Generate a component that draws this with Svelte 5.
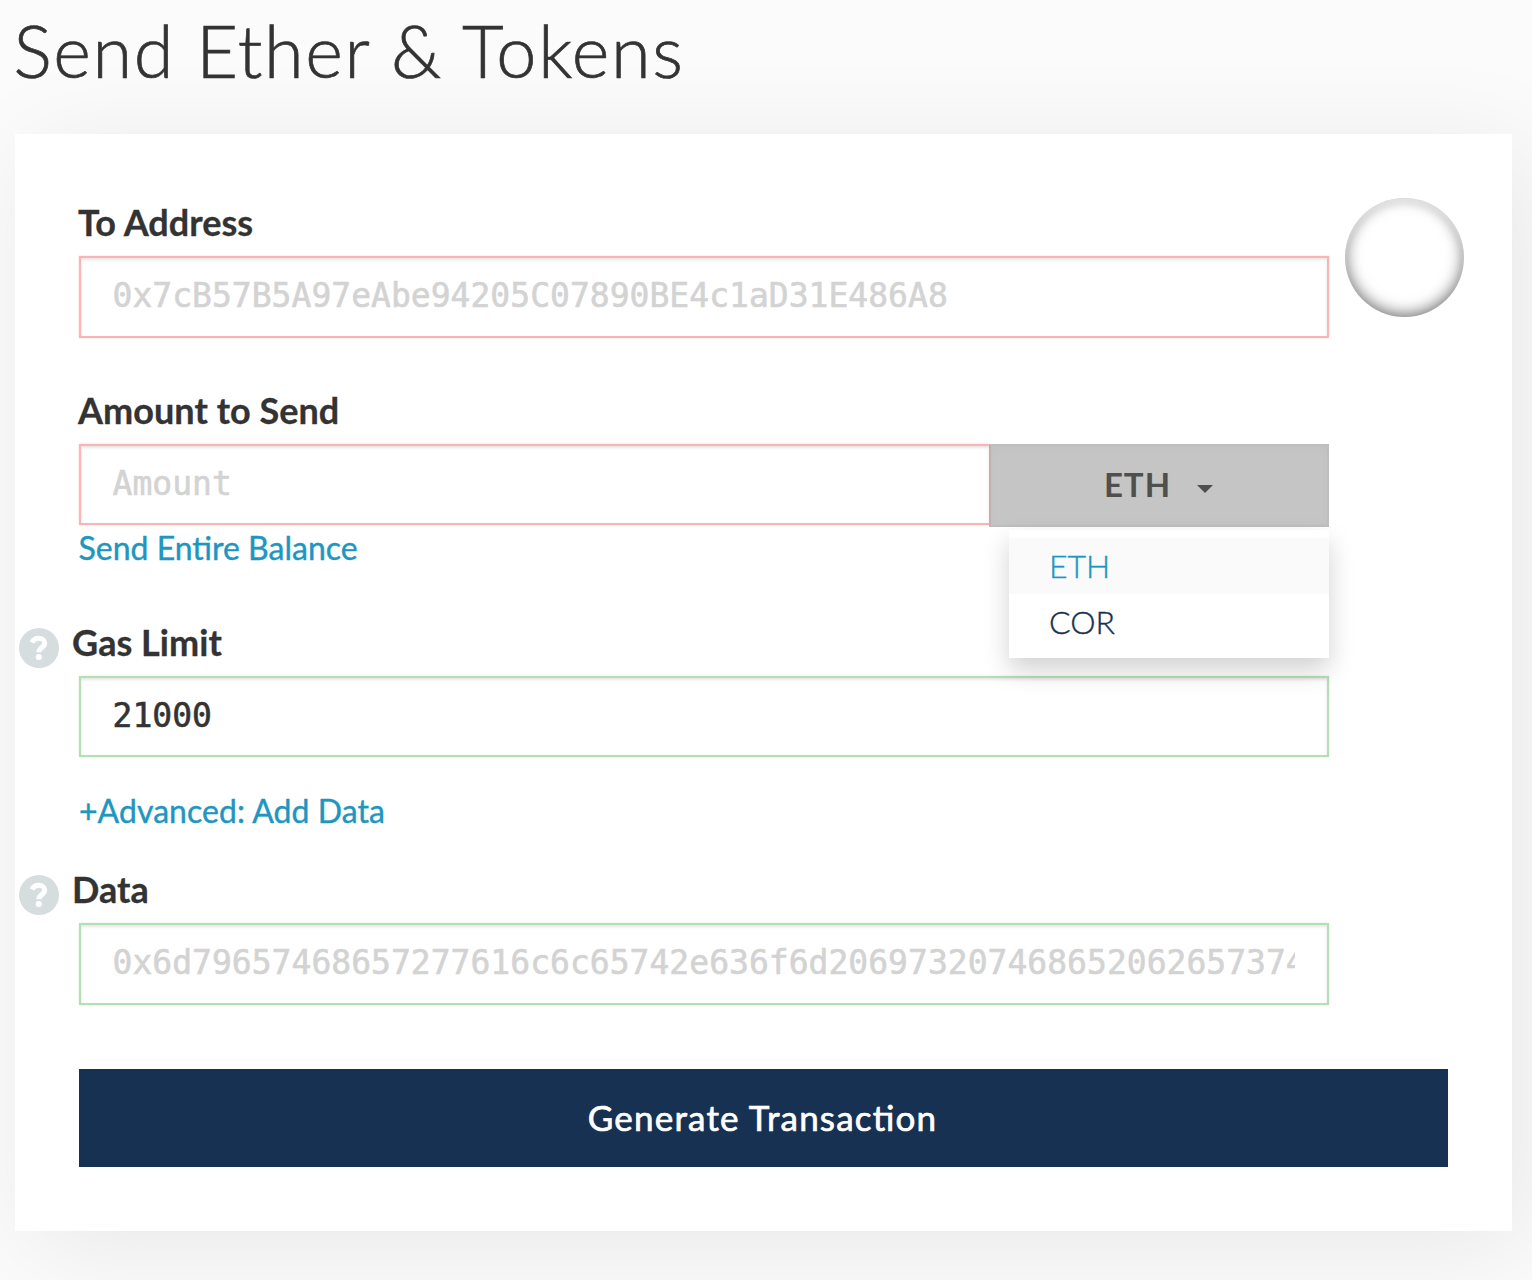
<script lang="ts">
	let address = $state('');
	let amount = $state('');
	let gasLimit = $state('21000');
	let data = $state('');
	let unit = $state('ETH');
	let open = $state(true);

	const units = ['ETH', 'COR'];

	function pick(name: string) {
		unit = name;
		open = false;
	}
</script>

{#snippet help()}
	<svg class="help" viewBox="0 0 40 40" aria-hidden="true">
		<circle cx="20" cy="20" r="20" fill="#d6dddf" />
		<path
			d="M13 14.4C14.2 11.6 16.4 10.3 19.6 10.3C23.2 10.3 25.7 12.3 25.7 15.2C25.7 19.4 19.8 19.6 19.8 24.2"
			fill="none"
			stroke="#fff"
			stroke-width="5"
		/>
		<circle cx="19.8" cy="29" r="3.1" fill="#fff" />
	</svg>
{/snippet}

<main>
	<h1>Send Ether &amp; Tokens</h1>

	<section class="card">
		<div class="top">
			<div class="field">
				<label for="address">To Address</label>
				<input
					id="address"
					class="invalid"
					placeholder="0x7cB57B5A97eAbe94205C07890BE4c1aD31E486A8"
					bind:value={address}
				/>
			</div>
			<div class="identicon"></div>
		</div>

		<div class="field amount">
			<label for="amount">Amount to Send</label>
			<div class="group">
				<input id="amount" class="invalid" placeholder="Amount" bind:value={amount} />
				<button class="unit" onclick={() => (open = !open)}>
					<span>{unit}</span>
					<i class="caret"></i>
				</button>
				{#if open}
					<ul class="menu">
						{#each units as name}
							<li class:active={name === unit}>
								<button onclick={() => pick(name)}>{name}</button>
							</li>
						{/each}
					</ul>
				{/if}
			</div>
			<a class="balance" href="#balance">Send Entire Balance</a>
		</div>

		<div class="field gas">
			<div class="label-row">
				{@render help()}
				<label for="gas">Gas Limit</label>
			</div>
			<input id="gas" class="valid" bind:value={gasLimit} />
		</div>

		<a class="advanced" href="#data">+Advanced: Add Data</a>

		<div class="field">
			<div class="label-row">
				{@render help()}
				<label for="data">Data</label>
			</div>
			<input
				id="data"
				class="valid"
				placeholder="0x6d79657468657277616c6c65742e636f6d20697320746865206265737421"
				bind:value={data}
			/>
		</div>

		<button class="generate">Generate Transaction</button>
	</section>
</main>

<style>
	:global(body) {
		background: #fbfbfb;
		overflow: hidden;
	}

	main {
		height: 1280px;
		padding: 0 20px 0 15px;
		box-sizing: border-box;
		overflow: hidden;
		font-family: Lato, sans-serif;
		color: #333;
	}

	h1 {
		height: 134px;
		margin: 0 0 0 -1.5px;
		padding-top: 7px;
		box-sizing: border-box;
		font-size: 72px;
		font-weight: 300;
		line-height: 86px;
		letter-spacing: 1.62px;
		white-space: nowrap;
		-webkit-text-stroke: 0.7px;
	}

	.card {
		display: flex;
		flex-direction: column;
		height: 1097px;
		padding: 64px;
		box-sizing: border-box;
		background: #fff;
		box-shadow: 16px 16px 96px rgba(0, 0, 0, 0.08);
	}

	.top {
		display: flex;
		gap: 16px;
		margin-right: -16px;
	}

	.field {
		width: 1250px;
		flex-shrink: 0;
	}

	label {
		display: block;
		height: 58px;
		margin-left: -1px;
		font-size: 36px;
		font-weight: 700;
		line-height: 48px;
		letter-spacing: 0.05px;
		white-space: nowrap;
		-webkit-text-stroke: 0.3px;
	}

	.label-row {
		display: flex;
		gap: 14px;
		margin-left: -60px;
	}

	.help {
		width: 40px;
		height: 40px;
		margin-top: 10px;
		flex-shrink: 0;
	}

	input {
		display: block;
		width: 100%;
		height: 82px;
		padding: 0 32px 3px 31.5px;
		box-sizing: border-box;
		border: 2px solid;
		border-radius: 0;
		outline: none;
		background: #fff;
		color: #333;
		font-family: 'DejaVu Sans Mono', monospace;
		font-size: 33px;
		letter-spacing: 0.02px;
		-webkit-text-stroke: 0.6px;
	}

	input::placeholder {
		color: #d3d3d3;
		opacity: 1;
	}

	.invalid {
		border-color: #f8b5b3;
		box-shadow: inset 0 2px 3px rgba(0, 0, 0, 0.1), 0 0 2px rgba(248, 181, 179, 0.6);
	}

	.valid {
		border-color: #b4dfb4;
		box-shadow: inset 0 2px 3px rgba(0, 0, 0, 0.1), 0 0 2px rgba(180, 223, 180, 0.6);
	}

	.identicon {
		width: 119px;
		height: 119px;
		flex-shrink: 0;
		border-radius: 50%;
		box-shadow: inset 0 4px 4px rgba(255, 255, 255, 0.5), inset 0 -2px 16px rgba(0, 0, 0, 0.6);
	}

	.amount {
		height: 184px;
		margin-top: 48px;
	}

	.group {
		position: relative;
		display: flex;
		height: 83px;
	}

	.group input {
		flex: 1;
		min-width: 0;
		height: 81px;
		border-right: 0;
	}

	.unit {
		display: flex;
		align-items: center;
		justify-content: center;
		gap: 26px;
		width: 340px;
		height: 83px;
		padding: 0 1px 0 0;
		border: 2px solid #bebebe;
		border-left-color: #c2afae;
		background: #c5c5c5;
		box-shadow: inset 0 3px 10px rgba(0, 0, 0, 0.02);
		color: #4f4f4f;
		font-family: inherit;
		font-size: 33px;
		font-weight: 700;
		letter-spacing: 1px;
	}

	.unit span {
		padding-bottom: 3px;
	}

	.caret {
		margin-top: 7px;
		border-top: 8px solid;
		border-right: 8px solid transparent;
		border-left: 8px solid transparent;
	}

	.menu {
		position: absolute;
		top: 86px;
		right: 0;
		z-index: 2;
		width: 320px;
		height: 128px;
		margin: 0;
		padding: 8px 0;
		box-sizing: border-box;
		background: #fff;
		box-shadow: 0 12px 24px rgba(0, 0, 0, 0.18);
		list-style: none;
	}

	.menu button {
		display: block;
		width: 100%;
		height: 56px;
		padding: 0 40px 2px;
		border: 0;
		background: none;
		color: #163151;
		font-family: inherit;
		font-size: 32px;
		font-weight: 300;
		text-align: left;
		-webkit-text-stroke: 0.4px;
	}

	.menu .active button {
		background: #fafafa;
		color: #1d96c0;
	}

	a {
		color: #1d96c0;
		font-size: 32px;
		text-decoration: none;
		white-space: nowrap;
		-webkit-text-stroke: 0.4px;
	}

	.balance {
		display: block;
		margin-left: -0.5px;
		line-height: 42px;
	}

	.gas {
		margin-top: 48px;
	}

	.gas input {
		height: 81px;
	}

	.advanced {
		margin-top: 32px;
		margin-bottom: 32px;
		line-height: 44px;
		letter-spacing: 0.05px;
	}

	.generate {
		height: 98px;
		margin-top: 64px;
		padding: 0 2px 2px 0;
		flex-shrink: 0;
		border: 0;
		background: #163151;
		color: #fff;
		font-family: inherit;
		font-size: 35px;
		letter-spacing: 1.2px;
		font-feature-settings: 'liga' 1;
		-webkit-text-stroke: 0.7px;
	}
</style>
